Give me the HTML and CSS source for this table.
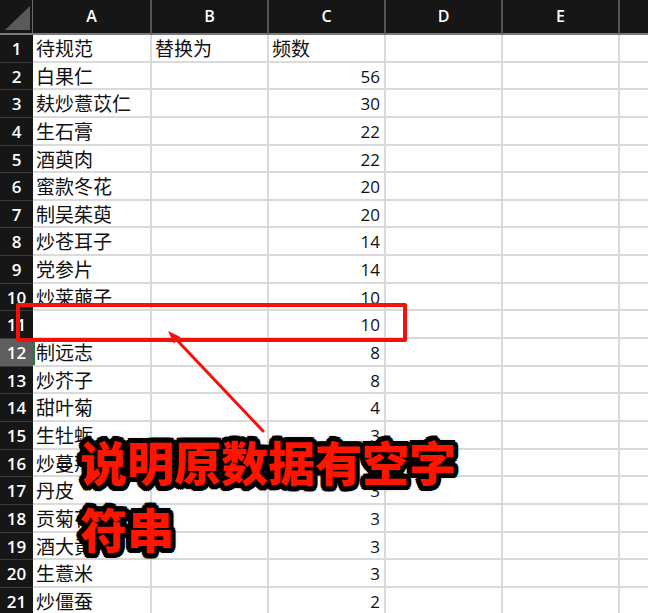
FILE: index.html
```html
<!DOCTYPE html>
<html lang="zh">
<head>
<meta charset="utf-8">
<title>Sheet</title>
<link rel="stylesheet" href="styles.css">
</head>
<body>
<div class="sheet">
  <div class="corner"><svg class="tri" width="33" height="35" viewBox="0 0 33 35"><polygon points="5,30 30,6 30,30" fill="#5a5a5a"/></svg></div>
  <div class="ch">A</div><div class="ch">B</div><div class="ch">C</div><div class="ch">D</div><div class="ch">E</div><div class="ch"></div>

  <div class="rh">1</div><div class="c">待规范</div><div class="c">替换为</div><div class="c">频数</div><div class="c"></div><div class="c"></div><div class="c"></div>
  <div class="rh">2</div><div class="c">白果仁</div><div class="c"></div><div class="c n">56</div><div class="c"></div><div class="c"></div><div class="c"></div>
  <div class="rh">3</div><div class="c">麸炒薏苡仁</div><div class="c"></div><div class="c n">30</div><div class="c"></div><div class="c"></div><div class="c"></div>
  <div class="rh">4</div><div class="c">生石膏</div><div class="c"></div><div class="c n">22</div><div class="c"></div><div class="c"></div><div class="c"></div>
  <div class="rh">5</div><div class="c">酒萸肉</div><div class="c"></div><div class="c n">22</div><div class="c"></div><div class="c"></div><div class="c"></div>
  <div class="rh">6</div><div class="c">蜜款冬花</div><div class="c"></div><div class="c n">20</div><div class="c"></div><div class="c"></div><div class="c"></div>
  <div class="rh">7</div><div class="c">制吴茱萸</div><div class="c"></div><div class="c n">20</div><div class="c"></div><div class="c"></div><div class="c"></div>
  <div class="rh">8</div><div class="c">炒苍耳子</div><div class="c"></div><div class="c n">14</div><div class="c"></div><div class="c"></div><div class="c"></div>
  <div class="rh">9</div><div class="c">党参片</div><div class="c"></div><div class="c n">14</div><div class="c"></div><div class="c"></div><div class="c"></div>
  <div class="rh">10</div><div class="c">炒莱菔子</div><div class="c"></div><div class="c n">10</div><div class="c"></div><div class="c"></div><div class="c"></div>
  <div class="rh">11</div><div class="c"></div><div class="c"></div><div class="c n">10</div><div class="c"></div><div class="c"></div><div class="c"></div>
  <div class="rh sel">12</div><div class="c cur">制远志</div><div class="c"></div><div class="c n">8</div><div class="c"></div><div class="c"></div><div class="c"></div>
  <div class="rh">13</div><div class="c">炒芥子</div><div class="c"></div><div class="c n">8</div><div class="c"></div><div class="c"></div><div class="c"></div>
  <div class="rh">14</div><div class="c">甜叶菊</div><div class="c"></div><div class="c n">4</div><div class="c"></div><div class="c"></div><div class="c"></div>
  <div class="rh">15</div><div class="c">生牡蛎</div><div class="c"></div><div class="c n">3</div><div class="c"></div><div class="c"></div><div class="c"></div>
  <div class="rh">16</div><div class="c">炒蔓荆子</div><div class="c"></div><div class="c n">3</div><div class="c"></div><div class="c"></div><div class="c"></div>
  <div class="rh">17</div><div class="c">丹皮</div><div class="c"></div><div class="c n">3</div><div class="c"></div><div class="c"></div><div class="c"></div>
  <div class="rh">18</div><div class="c">贡菊花</div><div class="c"></div><div class="c n">3</div><div class="c"></div><div class="c"></div><div class="c"></div>
  <div class="rh">19</div><div class="c">酒大黄</div><div class="c"></div><div class="c n">3</div><div class="c"></div><div class="c"></div><div class="c"></div>
  <div class="rh">20</div><div class="c">生薏米</div><div class="c"></div><div class="c n">3</div><div class="c"></div><div class="c"></div><div class="c"></div>
  <div class="rh">21</div><div class="c">炒僵蚕</div><div class="c"></div><div class="c n">2</div><div class="c"></div><div class="c"></div><div class="c"></div>

  <div class="mark-box"></div>
  <svg class="arrow" width="648" height="613" viewBox="0 0 648 613">
    <line x1="263" y1="431" x2="174" y2="337" stroke="#f5100c" stroke-width="3" stroke-linecap="round"/>
    <polygon points="168,331 180.5,337 174,343.5" fill="#f5100c"/>
  </svg>
  <div class="note">说明原数据有空字<br>符串</div>
</div>
</body>
</html>
```

FILE: styles.css
```css
html, body {
  margin: 0;
  padding: 0;
  background: #ffffff;
}

body {
  font-family: "Noto Sans CJK SC", "Noto Sans", sans-serif;
  overflow: hidden;
}

.sheet {
  position: relative;
  width: 648px;
  height: 613px;
  overflow: hidden;
  display: grid;
  grid-template-columns: 33px 119px 117px 117px 117px 117px 40px;
  grid-template-rows: 35px;
  grid-auto-rows: 27.65px;
}

.corner {
  background: #161616;
  border-right: 1px solid #6a6a6a;
  border-bottom: 2px solid #7a7a7a;
  box-sizing: border-box;
  position: relative;
}

.tri {
  display: block;
}

.ch {
  background: #161616;
  color: #ffffff;
  font-family: "Open Sans", "Noto Sans", sans-serif;
  font-weight: 600;
  font-size: 16px;
  display: flex;
  align-items: center;
  justify-content: center;
  box-sizing: border-box;
  border-right: 2px solid #555555;
  border-bottom: 2px solid #7a7a7a;
  padding-bottom: 1px;
}

.rh {
  background: #161616;
  color: #ffffff;
  font-family: "Open Sans", "Noto Sans", sans-serif;
  font-weight: 600;
  font-size: 17px;
  line-height: 20px;
  text-align: center;
  box-sizing: border-box;
  padding-top: 4px;
  border-bottom: 1px solid #3a3a3a;
}

.rh.sel {
  background: #5e5e5e;
}

.c {
  box-sizing: border-box;
  border-right: 2px solid #dadada;
  border-bottom: 2px solid #dadada;
  font-size: 19px;
  line-height: 20px;
  color: #111111;
  padding: 3px 3px 0 3px;
  white-space: nowrap;
  overflow: hidden;
}

.c.n {
  text-align: right;
  font-family: "Open Sans", "Noto Sans", sans-serif;
  font-size: 17px;
  padding-top: 4px;
  padding-right: 4px;
}

.c.cur {
  box-shadow: inset 2px 0 0 #1f7a47;
}

.mark-box {
  position: absolute;
  left: 16px;
  top: 303px;
  width: 391px;
  height: 39px;
  box-sizing: border-box;
  border: 4.5px solid #f5100c;
  border-radius: 2px;
}

.arrow {
  position: absolute;
  left: 0;
  top: 0;
  pointer-events: none;
}

.note {
  position: absolute;
  left: 80px;
  top: 427px;
  font-family: "Noto Sans CJK SC", sans-serif;
  font-weight: 900;
  font-size: 47px;
  line-height: 67px;
  color: #ff1400;
  white-space: nowrap;
  text-shadow:
    5px 0 0 #000, -5px 0 0 #000, 0 5px 0 #000, 0 -5px 0 #000,
    3.5px 3.5px 0 #000, -3.5px 3.5px 0 #000, 3.5px -3.5px 0 #000, -3.5px -3.5px 0 #000,
    4.6px 1.9px 0 #000, -4.6px 1.9px 0 #000, 4.6px -1.9px 0 #000, -4.6px -1.9px 0 #000,
    1.9px 4.6px 0 #000, -1.9px 4.6px 0 #000, 1.9px -4.6px 0 #000, -1.9px -4.6px 0 #000,
    0 0 7px #000;
}
```
